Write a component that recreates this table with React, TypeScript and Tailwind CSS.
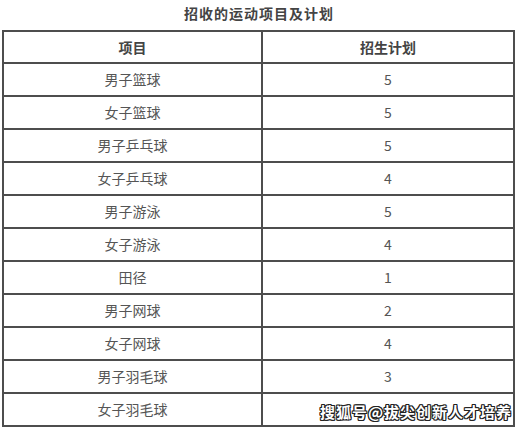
import React from "react";

const rows: [string, string][] = [
  ["男子篮球", "5"],
  ["女子篮球", "5"],
  ["男子乒乓球", "5"],
  ["女子乒乓球", "4"],
  ["男子游泳", "5"],
  ["女子游泳", "4"],
  ["田径", "1"],
  ["男子网球", "2"],
  ["女子网球", "4"],
  ["男子羽毛球", "3"],
  ["女子羽毛球", "3"],
];

export default function App() {
  return (
    <div
      className="relative w-[518px] h-[430px] bg-white overflow-hidden"
      style={{ fontFamily: '"Noto Sans CJK SC", "Noto Sans", sans-serif' }}
    >
      <div className="h-[30px] flex items-start justify-center pt-[3px] text-[14px] font-bold text-[#444] tracking-[1px]">
        招收的运动项目及计划
      </div>
      <div className="ml-[2px] w-[513px] border-2 border-[#4d4d4d]">
        <div className="grid grid-cols-[259px_1fr] h-[32px] border-b-2 border-[#4d4d4d] text-[14px] font-bold text-[#444]">
          <div className="flex items-center justify-center border-r-2 border-[#4d4d4d]">项目</div>
          <div className="flex items-center justify-center">招生计划</div>
        </div>
        {rows.map(([name, n], i) => (
          <div
            key={i}
            className={
              i < rows.length - 1
                ? "grid grid-cols-[259px_1fr] h-[33px] border-b-2 border-[#4d4d4d] text-[14px] text-[#555]"
                : "grid grid-cols-[259px_1fr] h-[31px] text-[14px] text-[#555]"
            }
          >
            <div className="flex items-center justify-center border-r-2 border-[#4d4d4d]">{name}</div>
            <div className="flex items-center justify-center">{n}</div>
          </div>
        ))}
      </div>
      <div
        className="absolute left-[320px] top-[402px] whitespace-nowrap text-[15px] leading-[20px] font-bold text-white tracking-[1px]"
        style={{
          textShadow:
            "1px 0 0 #222, -1px 0 0 #222, 0 1px 0 #222, 0 -1px 0 #222, 1px 1px 0 #222, -1px -1px 0 #222, 1px -1px 0 #222, -1px 1px 0 #222",
        }}
      >
        搜狐号@拔尖创新人才培养
      </div>
    </div>
  );
}
